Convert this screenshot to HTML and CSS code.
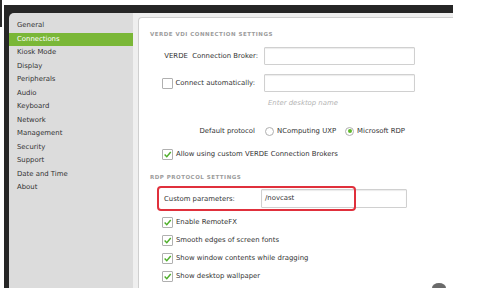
FILE: index.html
```html
<!DOCTYPE html>
<html lang="en">

<head>
    <meta charset="utf-8">
    <title>VERDE settings</title>
    <link rel="stylesheet" href="styles.css">
</head>

<body>
    <div class="edge"></div>

    <div class="window">
        <div class="titlebar"></div>
        <div class="body">
            <nav class="sidebar">
                <div class="item">General</div>
                <div class="item valgt">Connections</div>
                <div class="item">Kiosk Mode</div>
                <div class="item">Display</div>
                <div class="item">Peripherals</div>
                <div class="item">Audio</div>
                <div class="item">Keyboard</div>
                <div class="item">Network</div>
                <div class="item">Management</div>
                <div class="item">Security</div>
                <div class="item">Support</div>
                <div class="item">Date and Time</div>
                <div class="item">About</div>
            </nav>

            <div class="content">
                <section class="panel">
                    <h2 class="heading first">VERDE VDI CONNECTION SETTINGS</h2>

                    <div class="field broker">
                        <label class="label">VERDE&nbsp; Connection Broker:</label>
                        <div class="input"></div>
                    </div>

                    <div class="field auto">
                        <label class="label"><span class="box"></span>Connect automatically:</label>
                        <div class="input"></div>
                    </div>

                    <p class="hint">Enter desktop name</p>

                    <div class="field protocol">
                        <span class="label">Default protocol</span>
                        <span class="radio"></span><span class="opt">NComputing UXP</span>
                        <span class="radio on"></span><span class="opt">Microsoft RDP</span>
                    </div>

                    <div class="check allow">
                        <span class="box on"><svg viewBox="0 0 10 10"><polyline points="1.8,5 4.2,7.4 8.6,2.2" /></svg></span>
                        Allow using custom VERDE Connection Brokers
                    </div>

                    <h2 class="heading rdp">RDP PROTOCOL SETTINGS</h2>

                    <div class="field custom">
                        <span class="label">Custom parameters:</span>
                        <div class="input">/novcast</div>
                        <div class="mark"></div>
                    </div>

                    <div class="check list">
                        <span class="box on"><svg viewBox="0 0 10 10"><polyline points="1.8,5 4.2,7.4 8.6,2.2" /></svg></span>
                        Enable RemoteFX
                    </div>
                    <div class="check list">
                        <span class="box on"><svg viewBox="0 0 10 10"><polyline points="1.8,5 4.2,7.4 8.6,2.2" /></svg></span>
                        Smooth edges of screen fonts
                    </div>
                    <div class="check list">
                        <span class="box on"><svg viewBox="0 0 10 10"><polyline points="1.8,5 4.2,7.4 8.6,2.2" /></svg></span>
                        Show window contents while dragging
                    </div>
                    <div class="check list">
                        <span class="box on"><svg viewBox="0 0 10 10"><polyline points="1.8,5 4.2,7.4 8.6,2.2" /></svg></span>
                        Show desktop wallpaper
                    </div>
                </section>
            </div>
        </div>
    </div>

    <div class="blob"></div>
</body>

</html>
```

FILE: styles.css
```css
body {
    margin: 0;
    background-color: #ffffff;
    font-family: "DejaVu Sans", sans-serif;
    font-size: 6.9px;
    color: #333333;
    overflow: hidden;
}

.edge {
    position: absolute;
    left: 0;
    top: 0;
    width: 2px;
    height: 27px;
    background-color: #2b2b2b;
}

.window {
    margin: 5px 0 0 4px;
    width: 449px;
    height: 283px;
    background-color: #262626;
    display: flex;
    flex-direction: column;
}

.titlebar {
    height: 8px;
}

.body {
    flex: 1;
    display: flex;
    padding-left: 5px;
    overflow: hidden;
}

/* venstre menu */
.sidebar {
    width: 124px;
    background-color: #dcdcdc;
    border-top-left-radius: 5px;
    padding-top: 6px;
}

.item {
    height: 13.5px;
    line-height: 13.5px;
    padding-left: 8px;
}

.item.valgt {
    background-color: #7ab737;
    color: #ffffff;
}

.content {
    flex: 1;
    display: flex;
    background-color: #efefef;
    padding: 4px 0 0 5px;
}

.panel {
    flex: 1;
    background-color: #ffffff;
    border: 1px solid #cfcfcf;
    border-right: none;
    border-bottom: none;
    border-top-left-radius: 4px;
    padding-left: 11px;
}

.heading {
    margin: 0;
    height: 10px;
    line-height: 10px;
    font-size: 5.5px;
    font-weight: bold;
    letter-spacing: 0.5px;
    color: #9c9c9c;
}

.heading.first {
    margin-top: 11px;
}

.heading.rdp {
    margin-top: 12px;
}

.field {
    display: flex;
    align-items: center;
    position: relative;
}

.field .label {
    width: 108px;
    display: flex;
    align-items: center;
    justify-content: flex-end;
    margin-right: 6px;
}

.input {
    width: 146px;
    height: 16px;
    border: 1px solid #d0d0d0;
    border-radius: 1px;
    box-shadow: inset 0 1px 1px #ececec;
    background-color: #ffffff;
    line-height: 16px;
    padding-left: 3px;
    box-sizing: content-box;
}

.broker {
    margin-top: 8px;
}

.auto {
    margin-top: 9px;
}

.auto .label {
    margin-right: 9px;
    width: 105px;
}

.auto .box {
    margin-right: 3px;
}

.hint {
    margin: 6px 0 0 118px;
    height: 10px;
    line-height: 10px;
    font-style: italic;
    color: #b4b4b4;
}

.protocol {
    margin-top: 17px;
    height: 12px;
}

.protocol .label {
    width: 105px;
    margin-right: 10px;
}

.radio {
    width: 7px;
    height: 7px;
    border: 1px solid #b0b0b0;
    border-radius: 50%;
    background-color: #ffffff;
    position: relative;
    margin-right: 3px;
    flex-shrink: 0;
}

.radio.on::after {
    content: "";
    position: absolute;
    left: 1.5px;
    top: 1.5px;
    width: 4px;
    height: 4px;
    border-radius: 50%;
    background-color: #5fb92c;
}

.opt {
    margin-right: 9px;
}

.box {
    display: inline-block;
    width: 9px;
    height: 9px;
    border: 1px solid #b0b0b0;
    border-radius: 1px;
    background-color: #ffffff;
    flex-shrink: 0;
}

.box svg {
    display: block;
    width: 9px;
    height: 9px;
}

.box polyline {
    fill: none;
    stroke: #4fae2a;
    stroke-width: 1.6;
}

.check {
    display: flex;
    align-items: center;
    height: 12px;
    padding-left: 12px;
}

.check .box {
    margin-right: 3px;
}

.allow {
    margin-top: 11px;
}

.custom {
    margin-top: 7px;
}

.custom .label {
    width: 97px;
    justify-content: flex-start;
    padding-left: 14px;
    margin-right: 0;
}

.custom .input {
    width: 141px;
    height: 17px;
    line-height: 17px;
}

/* rød markering */
.mark {
    position: absolute;
    left: 7px;
    top: -3px;
    width: 195px;
    height: 21px;
    border: 2px solid #e0303c;
    border-radius: 4px;
}

.list {
    margin-top: 6px;
}

.custom + .list {
    margin-top: 8px;
}

.blob {
    position: absolute;
    left: 432px;
    top: 283px;
    width: 14px;
    height: 10px;
    border-radius: 50%;
    background-color: #6a6a6a;
}
```
